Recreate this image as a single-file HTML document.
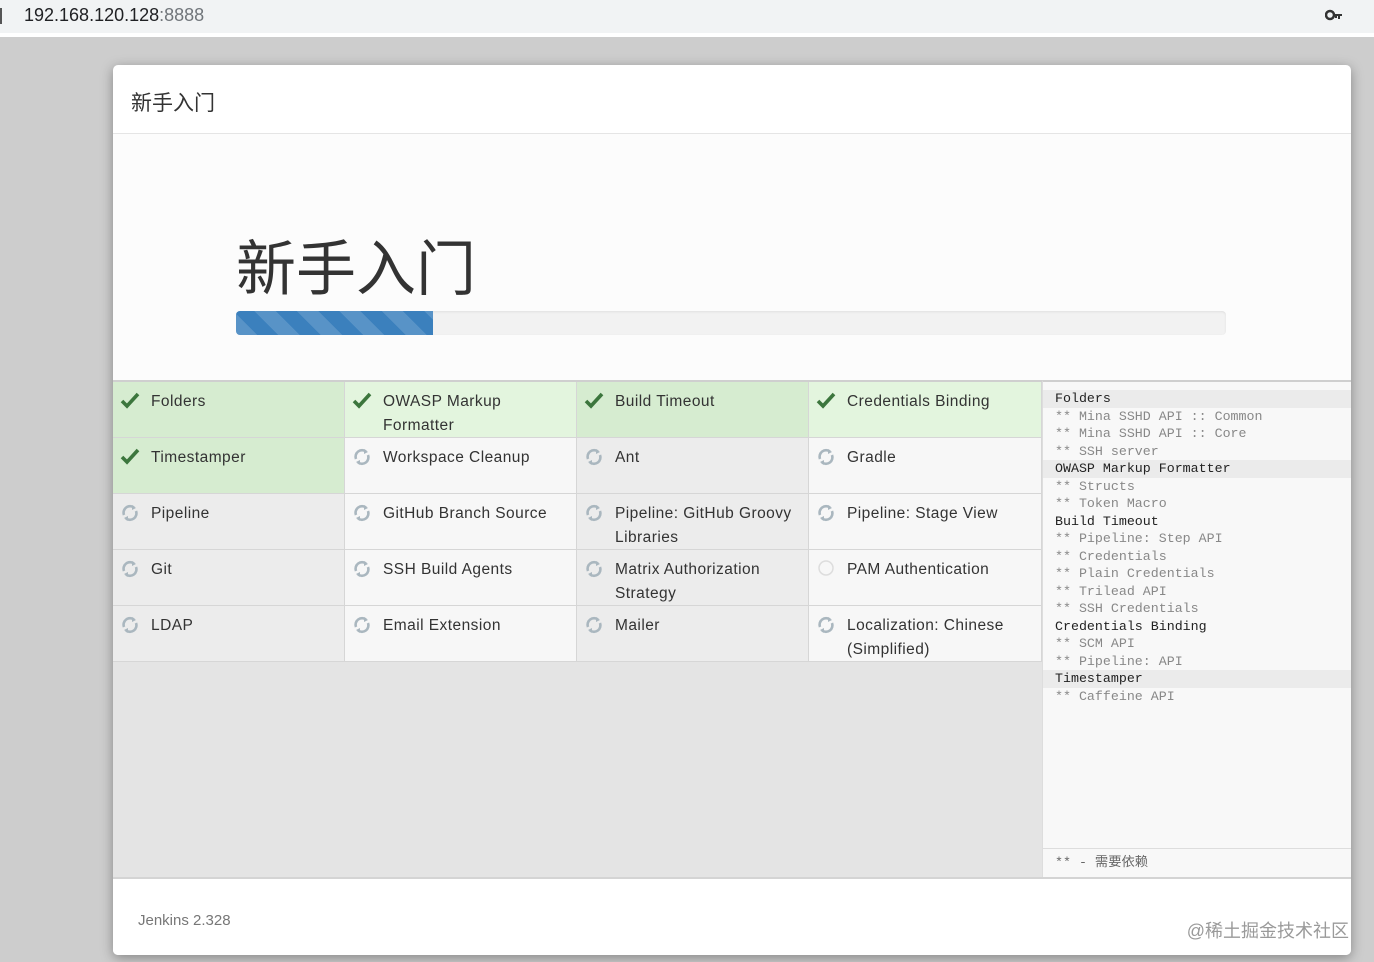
<!DOCTYPE html>
<html><head><meta charset="utf-8">
<style>
*{margin:0;padding:0;box-sizing:border-box}
body{width:1374px;height:962px;overflow:hidden;background:#cdcdcd;font-family:"Liberation Sans","Noto Sans CJK SC",sans-serif;position:relative}
.bar{position:absolute;left:0;top:0;width:1374px;height:33px;background:#f1f3f4}
.bar2{position:absolute;left:0;top:33px;width:1374px;height:4px;background:#fff}
.url{position:absolute;left:24px;top:5px;font-size:18px;color:#202124}
.url span{color:#70757a}
.modal{position:absolute;left:113px;top:65px;width:1238px;height:890px;background:#fff;border-radius:5px;box-shadow:0 3px 12px rgba(0,0,0,.35);overflow:hidden}
.hdr{position:absolute;left:0;top:0;width:100%;height:69px;border-bottom:1px solid #e5e5e5;font-size:21px;color:#333;padding:22px 0 0 18px}
.jumbo{position:absolute;left:0;top:69px;width:100%;height:247px;background:#fcfcfc}
.big{position:absolute;left:123px;top:106px;font-size:60px;color:#333;line-height:1}
.prog{position:absolute;left:123px;top:177px;width:990px;height:24px;background:#f2f2f2;border-radius:4px;overflow:hidden;box-shadow:inset 0 1px 2px rgba(0,0,0,.08)}
.prog div{width:197px;height:100%;background:#3b80bd;background-image:repeating-linear-gradient(45deg,rgba(255,255,255,.15) 0 15px,transparent 15px 30px)}
.grid{position:absolute;left:0;top:315px;width:929px;height:497px;background:#e4e4e4;border-top:2px solid #cfcfcf}
.cell{position:absolute;height:56px;border-right:1px solid #d6d6d6;border-bottom:1px solid #d6d6d6;font-size:15.5px;letter-spacing:0.45px;color:#333;line-height:24px;padding:8px 6px 0 38px}
.c0,.c2{background:#ececec}.c1,.c3{background:#f7f7f7}
.ok.c0,.ok.c2{background:#d6ecd0}.ok.c1,.ok.c3{background:#e3f5de}
.ic{position:absolute;left:7px;top:9px;width:20px;height:20px}
.side{position:absolute;left:929px;top:315px;width:309px;height:497px;background:#f8f8f8;border-left:1px solid #ddd;border-top:2px solid #cfcfcf;font-family:"Liberation Mono","Noto Sans CJK SC",monospace;font-size:13.3px;color:#888}
.side .l{height:17.5px;line-height:17.5px;padding-left:12px;white-space:pre}
.side .h{color:#222}.side .g{background:#ebebeb}
.foot2{position:absolute;left:0;bottom:0;width:100%;height:29px;border-top:1px solid #ddd;padding-left:12px;line-height:28px;color:#666}
.ftr{position:absolute;left:0;top:812px;width:100%;height:78px;border-top:2px solid #d4d4d4;background:#fff}
.ver{position:absolute;left:25px;top:33px;font-size:15px;color:#777}
.wm{position:absolute;right:2px;top:38px;font-size:18px;color:#9a9a9a}
</style></head><body>
<div class="bar"></div><div class="bar2"></div>
<div class="url">192.168.120.128<span>:8888</span></div>
<div style="position:absolute;left:0;top:8px;width:2px;height:16px;background:#555"></div>
<svg style="position:absolute;left:1325px;top:9px" width="18" height="12" viewBox="0 0 18 12"><circle cx="5" cy="6" r="4" fill="none" stroke="#333" stroke-width="2.5"/><path d="M9 5h8v2h-2v3h-2V7h-1v2h-2V7H9z" fill="#333"/></svg>
<div class="modal">
 <div class="hdr">新手入门</div>
 <div class="jumbo"><div class="big">新手入门</div><div class="prog"><div></div></div></div>
 <div class="grid" id="g"></div>
 <div class="side">
  <div style="height:8px"></div>
  <div class="l h g">Folders</div>
  <div class="l">** Mina SSHD API :: Common</div>
  <div class="l">** Mina SSHD API :: Core</div>
  <div class="l">** SSH server</div>
  <div class="l h g">OWASP Markup Formatter</div>
  <div class="l">** Structs</div>
  <div class="l">** Token Macro</div>
  <div class="l h">Build Timeout</div>
  <div class="l">** Pipeline: Step API</div>
  <div class="l">** Credentials</div>
  <div class="l">** Plain Credentials</div>
  <div class="l">** Trilead API</div>
  <div class="l">** SSH Credentials</div>
  <div class="l h">Credentials Binding</div>
  <div class="l">** SCM API</div>
  <div class="l">** Pipeline: API</div>
  <div class="l h g">Timestamper</div>
  <div class="l">** Caffeine API</div>
  <div class="foot2">** - 需要依赖</div>
 </div>
 <div class="ftr"><div class="ver">Jenkins 2.328</div><div class="wm">@稀土掘金技术社区</div></div>
</div>
<script>
var items=[["Folders",1],["OWASP Markup Formatter",1],["Build Timeout",1],["Credentials Binding",1],
["Timestamper",1],["Workspace Cleanup",0],["Ant",0],["Gradle",0],
["Pipeline",0],["GitHub Branch Source",0],["Pipeline: GitHub Groovy Libraries",0],["Pipeline: Stage View",0],
["Git",0],["SSH Build Agents",0],["Matrix Authorization Strategy",0],["PAM Authentication",2],
["LDAP",0],["Email Extension",0],["Mailer",0],["Localization: Chinese (Simplified)",0]];
var chk='<svg class="ic" viewBox="0 0 20 20"><path d="M2 10l5 5L18 3" fill="none" stroke="#3c763d" stroke-width="3.6"/></svg>';
var ref='<svg class="ic" viewBox="0 0 20 20"><path d="M4 12A6.5 6.5 0 0 1 14 4.5" fill="none" stroke="#aab7bf" stroke-width="2.6"/><path d="M12 2l4 3-4 2z" fill="#aab7bf"/><path d="M16 8A6.5 6.5 0 0 1 6 15.5" fill="none" stroke="#aab7bf" stroke-width="2.6"/><path d="M8 18l-4-3 4-2z" fill="#aab7bf"/></svg>';
var cir='<svg class="ic" viewBox="0 0 20 20"><circle cx="10" cy="9" r="7" fill="none" stroke="#ddd" stroke-width="1.5"/></svg>';
var h='';
items.forEach(function(it,i){var r=Math.floor(i/4),c=i%4;
h+='<div class="cell c'+c+(it[1]==1?' ok':'')+'" style="left:'+(c*232)+'px;top:'+(r*56)+'px;width:'+(c==3?233:232)+'px">'+(it[1]==1?chk:it[1]==2?cir:ref)+it[0]+'</div>';});
document.getElementById('g').innerHTML=h;
</script>
</body></html>
